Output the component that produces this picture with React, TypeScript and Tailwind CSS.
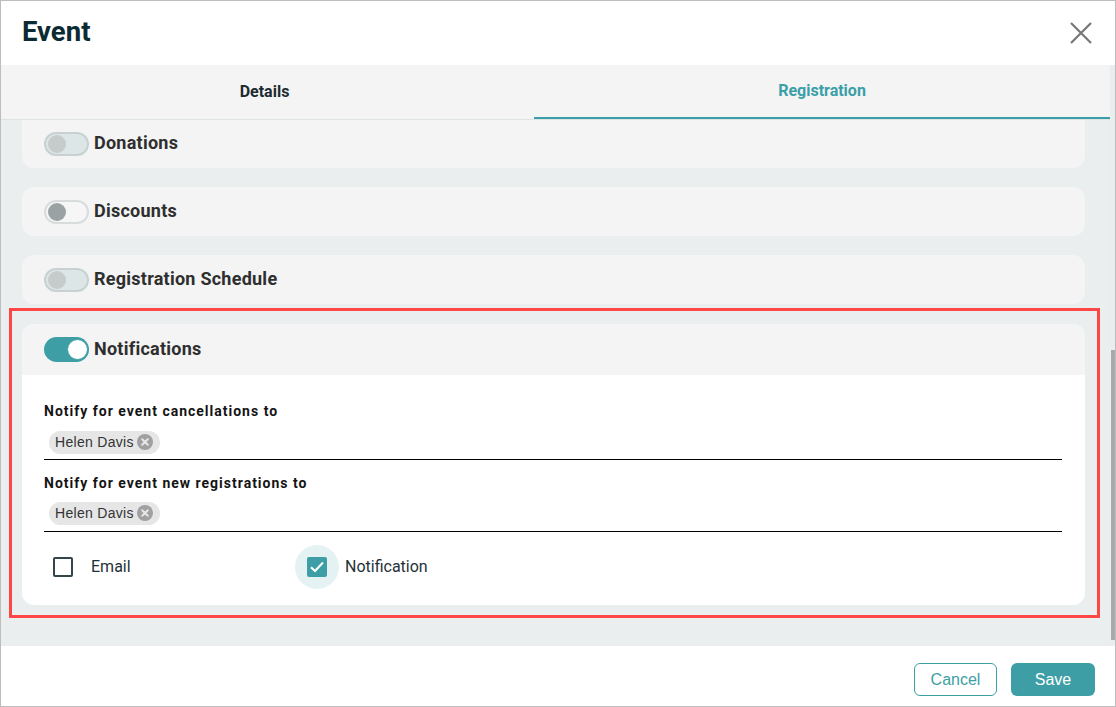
import React from "react";

function Toggle({ state }: { state: "disabled" | "off" | "on" }) {
  if (state === "on") {
    return (
      <div className="relative w-[45px] h-[25px] rounded-full bg-[#3d9ea6] shrink-0">
        <div className="absolute right-[1px] top-[2px] w-[21px] h-[21px] rounded-full bg-white border border-[#3d9ea6]" />
      </div>
    );
  }
  if (state === "off") {
    return (
      <div className="relative w-[45px] h-[24px] rounded-full bg-[#f6f6f6] border-2 border-[#d9dcdc] shrink-0">
        <div className="absolute left-[2px] top-[1px] w-[18px] h-[18px] rounded-full bg-[#9aa2a4]" />
      </div>
    );
  }
  return (
    <div className="relative w-[45px] h-[24px] rounded-full bg-[#dce6e7] border-2 border-[#c8d1d2] shrink-0">
      <div className="absolute left-[2px] top-[1px] w-[18px] h-[18px] rounded-full bg-[#c6cbcc]" />
    </div>
  );
}

function Chip() {
  return (
    <div className="inline-flex items-center h-[23px] rounded-full bg-[#e6e6e6] pl-[6px] pr-[7px] ml-[5px]">
      <span
        className="text-[14px] text-[#333] leading-none tracking-[0.3px]"
        style={{ fontFamily: "'Liberation Sans', Arial, sans-serif" }}
      >
        Helen Davis
      </span>
      <svg width="16" height="16" viewBox="0 0 16 16" className="ml-[3px]">
        <circle cx="8" cy="8" r="8" fill="#a0a0a0" />
        <path d="M5.2 5.2 L10.8 10.8 M10.8 5.2 L5.2 10.8" stroke="#e6e6e6" strokeWidth="2" strokeLinecap="round" />
      </svg>
    </div>
  );
}

function SimpleCard({ label, state, className = "" }: { label: string; state: "disabled" | "off" | "on"; className?: string }) {
  return (
    <div className={"h-[49px] rounded-[12px] bg-[#f4f4f4] flex items-center px-[22px] shrink-0 " + className}>
      <Toggle state={state} />
      <span className="ml-[5px] text-[18px] font-bold text-[#2e2e2e] tracking-[0.25px] mt-[-2px]">{label}</span>
    </div>
  );
}

export default function App() {
  return (
    <div
      className="w-[1116px] h-[707px] border border-[#bdbdbd] bg-white flex flex-col overflow-hidden"
      style={{ fontFamily: "Roboto, 'Liberation Sans', sans-serif" }}
    >
      {/* Header */}
      <div className="h-[64px] shrink-0 flex items-center justify-between pl-[21px] pr-[22px] pb-[3px]">
        <h1 className="text-[27.5px] font-bold text-[#0c2a32]">Event</h1>
        <svg width="24" height="24" viewBox="0 0 24 24" className="mt-[2px]">
          <path d="M2 2 L22 22 M22 2 L2 22" stroke="#777" strokeWidth="2.2" />
        </svg>
      </div>

      {/* Middle */}
      <div className="flex flex-1 min-h-0">
        <div className="w-[1109px] flex flex-col min-h-0">
          {/* Tabs */}
          <div className="h-[55px] shrink-0 flex bg-[#f4f4f4] border-b border-[#dde3e3]">
            <div className="w-[533px] flex items-center justify-center text-[16px] font-bold text-[#1c2b31] pr-[6px]">
              Details
            </div>
            <div className="flex-1 flex items-center justify-center text-[16px] font-bold text-[#3a9fa8] border-b-2 border-[#3a9fa8]">
              Registration
            </div>
          </div>
          {/* Content */}
          <div className="flex-1 min-h-0 overflow-hidden bg-[#ebeeef] pl-[21px] pr-[25px]">
            <div className="flex flex-col gap-[19px] mt-[-1px]">
              <SimpleCard label="Donations" state="disabled" className="rounded-t-none" />
              <SimpleCard label="Discounts" state="off" />
              <SimpleCard label="Registration Schedule" state="disabled" />
              <div className="relative rounded-[12px] bg-white mt-[1px]">
                <div className="absolute -left-[13px] -top-[16px] -right-[15px] -bottom-[13px] border-[3px] border-[#ff4646] pointer-events-none" />
                <div className="h-[51px] rounded-t-[12px] bg-[#f4f4f4] flex items-center px-[22px]">
                  <Toggle state="on" />
                  <span className="ml-[5px] text-[18px] font-bold text-[#2e2e2e] tracking-[0.25px] mt-[-2px]">Notifications</span>
                </div>
                <div className="pt-[28px] pl-[22px] pr-[23px] pb-[16px]">
                  <div className="text-[14px] font-bold text-[#141414] tracking-[1px] leading-[17px]">
                    Notify for event cancellations to
                  </div>
                  <div className="mt-[10px] pb-[5px] border-b border-black">
                    <Chip />
                  </div>
                  <div className="mt-[15px] text-[14px] font-bold text-[#141414] tracking-[1px] leading-[17px]">
                    Notify for event new registrations to
                  </div>
                  <div className="mt-[9px] pb-[6px] border-b border-black">
                    <Chip />
                  </div>
                  <div className="mt-[13px] flex items-center">
                    <div className="w-[254px] flex items-center ml-[-3px]">
                      <div className="w-[44px] h-[44px] flex items-center justify-center">
                        <div className="w-[20px] h-[20px] rounded-[2px] border-2 border-[#34454c]" />
                      </div>
                      <span className="ml-[6px] text-[16px] text-[#1f3137]">Email</span>
                    </div>
                    <div className="flex items-center">
                      <div className="w-[44px] h-[44px] rounded-full bg-[#e5f2f3] flex items-center justify-center">
                        <div className="w-[20px] h-[20px] rounded-[2px] bg-[#3d9ea6] flex items-center justify-center">
                          <svg width="20" height="20" viewBox="0 0 20 20">
                            <path d="M4 10.2 L8 14 L16 5.5" stroke="white" strokeWidth="2" fill="none" />
                          </svg>
                        </div>
                      </div>
                      <span className="ml-[6px] text-[16px] text-[#1f3137]">Notification</span>
                    </div>
                  </div>
                </div>
              </div>
            </div>
          </div>
        </div>
        {/* Scrollbar */}
        <div className="flex-1 bg-[#e9eded] relative">
          <div className="absolute left-[1px] right-0 top-[285px] bottom-[6px] bg-[#a9a9a9]" />
        </div>
      </div>

      {/* Footer */}
      <div className="h-[60px] shrink-0 flex justify-end items-start pt-[17px] pr-[20px] gap-[14px]">
        <button
          className="w-[83px] h-[33px] rounded-[6px] border border-[#3d9ea6] text-[#3d9ea6] text-[16px] bg-white"
          style={{ fontFamily: "'Liberation Sans', Arial, sans-serif" }}
        >
          Cancel
        </button>
        <button
          className="w-[84px] h-[33px] rounded-[6px] bg-[#3d9ea6] text-white text-[16px] font-medium"
          style={{ fontFamily: "'Liberation Sans', Arial, sans-serif" }}
        >
          Save
        </button>
      </div>
    </div>
  );
}
